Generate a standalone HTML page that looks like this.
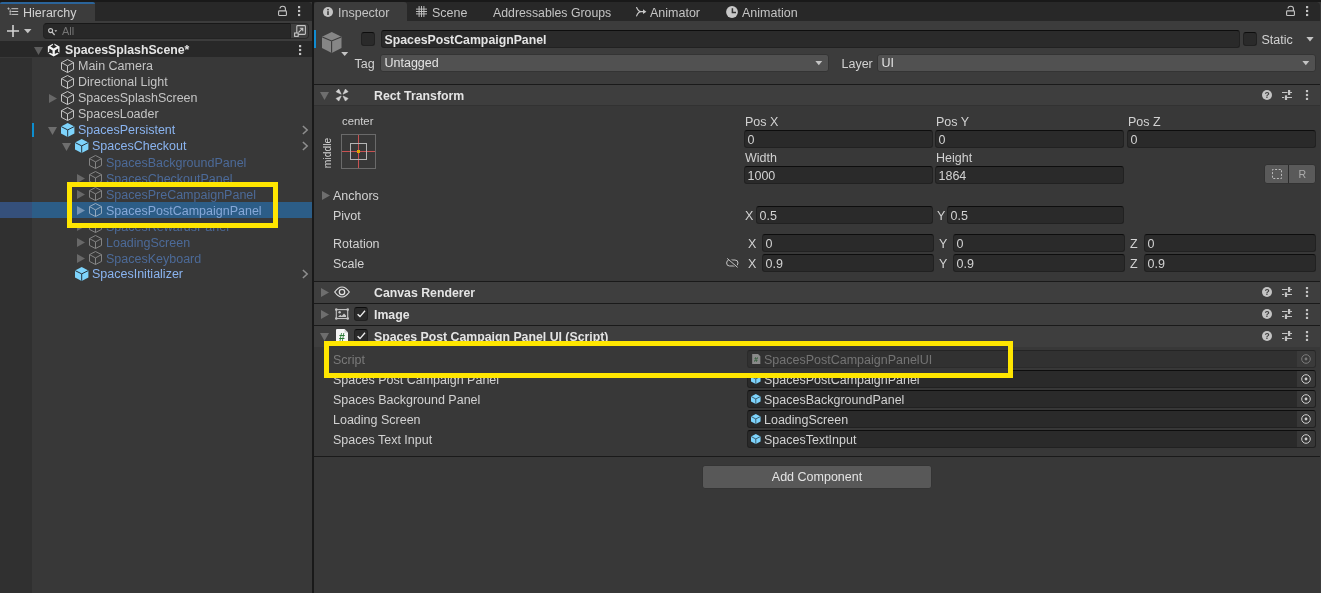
<!DOCTYPE html>
<html><head><meta charset="utf-8">
<style>
*{box-sizing:border-box;margin:0;padding:0}
html,body{width:1321px;height:593px;overflow:hidden;background:#383838}
body{font-family:"Liberation Sans",sans-serif;font-size:12.5px;color:#d2d2d2;position:relative;-webkit-font-smoothing:antialiased}
#root{position:absolute;left:0;top:0;width:1321px;height:593px;will-change:transform;transform:translateZ(0)}
.abs{position:absolute}
.t{position:absolute;white-space:nowrap;line-height:16px;height:16px}
.b{font-weight:700;font-size:12.3px}
svg{position:absolute;overflow:visible}
.fld{position:absolute;height:18px;background:#2a2a2a;border:1px solid #212121;border-top-color:#0d0d0d;border-radius:3px}
.fld span{position:absolute;left:2.5px;top:1px;line-height:16px;white-space:nowrap}
.hdr{position:absolute;left:314px;width:1007px;height:22px;background:#3e3e3e;border-top:1px solid #1a1a1a}
.chk{position:absolute;width:14px;height:14px;background:#2a2a2a;border:1px solid #212121;border-top-color:#0d0d0d;border-radius:3px}
.dd{position:absolute;height:18px;background:#515151;border:1px solid #343434;border-radius:3px}
.dd span{position:absolute;left:3.5px;top:0;line-height:16px;white-space:nowrap;color:#e4e4e4}
</style></head>
<body><div id="root">
<div class="abs" style="left:0;top:0;width:1321px;height:2px;background:#191919"></div>

<div class="abs" style="left:0;top:2px;width:312px;height:19px;background:#282828;border-radius:0 4px 0 0"></div>
<div class="abs" style="left:0;top:2px;width:95px;height:19px;background:#3c3c3c;border-top:2px solid #2b649a;border-radius:2px 2px 0 0"></div>
<svg style="left:7px;top:7.4px" width="12" height="9" viewBox="0 0 12 9"><path d="M4.4 1.7 H11.2 M4.4 4.5 H11.2 M4.4 7.4 H11.2" stroke="#c8c8c8" stroke-width="1"/><path d="M0.4 1.6 H2.6 M1.5 0.5 V2.7 M3.2 2.4 V7.8 M2.6 4.5 H3.8 M2.6 7.4 H3.8" stroke="#c8c8c8" stroke-width="0.8" fill="none"/></svg>
<div class="t" style="left:23px;top:5px">Hierarchy</div>
<svg style="left:277.5px;top:6px" width="9" height="10" viewBox="0 0 9 10"><rect x="0.6" y="4.9" width="7.8" height="4.6" rx="0.8" fill="none" stroke="#c4c4c4" stroke-width="1.1"/><path d="M2 2.6 a2.7 2.4 0 0 1 5.4 0 V4.9" fill="none" stroke="#c4c4c4" stroke-width="1.1"/></svg>
<svg style="left:297.7px;top:6px" width="2.2" height="10.2" viewBox="0 0 2.2 10.2"><rect x="0" y="0" width="2.2" height="2.2" fill="#c4c4c4"/><rect x="0" y="3.9" width="2.2" height="2.2" fill="#c4c4c4"/><rect x="0" y="7.9" width="2.2" height="2.2" fill="#c4c4c4"/></svg>
<div class="abs" style="left:0;top:21px;width:312px;height:20px;background:#3c3c3c"></div>
<svg style="left:7px;top:25px" width="12" height="12" viewBox="0 0 12 12"><path d="M6 0 V12 M0 6 H12" stroke="#d2d2d2" stroke-width="1.6"/></svg>
<svg style="left:23.5px;top:29px" width="7.5" height="4.3" viewBox="0 0 7 4"><path d="M0 0 H7 L3.5 4 Z" fill="#c4c4c4"/></svg>
<div class="abs" style="left:43px;top:23px;width:248px;height:16px;background:#282828;border:1px solid #232323;border-top-color:#181818;border-radius:4px 0 0 4px"></div>
<svg style="left:48px;top:28px" width="10" height="8" viewBox="0 0 10 8"><circle cx="2.6" cy="2.6" r="2" fill="none" stroke="#c4c4c4" stroke-width="1.1"/><path d="M4 4 L6.6 7" stroke="#c4c4c4" stroke-width="1.2"/><path d="M6.4 2.3 H9.2 L7.8 3.9 Z" fill="#c4c4c4"/></svg>
<div class="t" style="left:62px;top:22.9px;color:#747474;font-size:11px">All</div>
<div class="abs" style="left:291px;top:23px;width:18px;height:16px;background:#404040;border:1px solid #2a2a2a;border-left:none;border-radius:0 4px 4px 0"></div>
<svg style="left:294px;top:25px" width="12" height="12" viewBox="0 0 12 12"><rect x="2.8" y="0.6" width="8.6" height="8.8" rx="0.8" fill="none" stroke="#c4c4c4" stroke-width="1.1"/><rect x="0.6" y="8" width="3.6" height="3.4" fill="#404040" stroke="#c4c4c4" stroke-width="1.1"/><path d="M4.6 7.4 L8.6 3.4 M5.8 3.2 H8.8 V6.2" stroke="#c4c4c4" stroke-width="1.1" fill="none"/></svg>
<div class="abs" style="left:0;top:58px;width:32px;height:535px;background:#303030"></div>
<div class="abs" style="left:0;top:41px;width:312px;height:16px;background:#282828"></div>
<svg style="left:34px;top:47px" width="9" height="8" viewBox="0 0 9 8"><path d="M0 0 L9 0 L4.5 8 Z" fill="#5e5e5e"/></svg>
<svg style="left:47.3px;top:42.8px" width="13.4" height="13.8" viewBox="0 0 14 14"><path d="M7 0 L13.1 3.5 L13.1 10.5 L7 14 L0.9 10.5 L0.9 3.5 Z" fill="#f4f4f4"/><g fill="#282828"><path d="M6.2 -0.2 H7.8 V2 L10.4 3.5 L7 5.5 L3.6 3.5 L6.2 2 Z"/><path d="M2.4 5.6 L5.8 7.5 V11.3 L2.4 9.4 Z"/><path d="M11.6 5.6 L8.2 7.5 V11.3 L11.6 9.4 Z"/><path d="M0.5 10.1 L2.9 8.7 L3.5 9.7 L1.2 11.2 Z"/><path d="M13.5 10.1 L11.1 8.7 L10.5 9.7 L12.8 11.2 Z"/></g></svg>
<div class="t b" style="left:65px;top:41.5px;color:#e4e4e4">SpacesSplashScene*</div>
<svg style="left:298.9px;top:44.9px" width="2.2" height="10.2" viewBox="0 0 2.2 10.2"><rect x="0" y="0" width="2.2" height="2.2" fill="#c4c4c4"/><rect x="0" y="3.9" width="2.2" height="2.2" fill="#c4c4c4"/><rect x="0" y="7.9" width="2.2" height="2.2" fill="#c4c4c4"/></svg>
<svg style="left:61px;top:59px" width="14" height="14" viewBox="0 0 14 14" opacity="1"><path d="M6.5 0.5 L12.5 3.6 L12.5 10.4 L6.5 13.5 L0.5 10.4 L0.5 3.6 Z M0.5 3.6 L6.5 6.9 L12.5 3.6 M6.5 6.9 L6.5 13.5" fill="none" stroke="#c4c4c4" stroke-width="1" stroke-linejoin="round"/></svg><div class="t" style="left:78px;top:58px;color:#c4c4c4">Main Camera</div>
<svg style="left:61px;top:75px" width="14" height="14" viewBox="0 0 14 14" opacity="1"><path d="M6.5 0.5 L12.5 3.6 L12.5 10.4 L6.5 13.5 L0.5 10.4 L0.5 3.6 Z M0.5 3.6 L6.5 6.9 L12.5 3.6 M6.5 6.9 L6.5 13.5" fill="none" stroke="#c4c4c4" stroke-width="1" stroke-linejoin="round"/></svg><div class="t" style="left:78px;top:74px;color:#c4c4c4">Directional Light</div>
<svg style="left:49px;top:94.1px" width="8" height="9" viewBox="0 0 8 9"><path d="M0 0 L8 4.5 L0 9 Z" fill="#686868"/></svg><svg style="left:61px;top:91px" width="14" height="14" viewBox="0 0 14 14" opacity="1"><path d="M6.5 0.5 L12.5 3.6 L12.5 10.4 L6.5 13.5 L0.5 10.4 L0.5 3.6 Z M0.5 3.6 L6.5 6.9 L12.5 3.6 M6.5 6.9 L6.5 13.5" fill="none" stroke="#c4c4c4" stroke-width="1" stroke-linejoin="round"/></svg><div class="t" style="left:78px;top:90px;color:#c4c4c4">SpacesSplashScreen</div>
<svg style="left:61px;top:107px" width="14" height="14" viewBox="0 0 14 14" opacity="1"><path d="M6.5 0.5 L12.5 3.6 L12.5 10.4 L6.5 13.5 L0.5 10.4 L0.5 3.6 Z M0.5 3.6 L6.5 6.9 L12.5 3.6 M6.5 6.9 L6.5 13.5" fill="none" stroke="#c4c4c4" stroke-width="1" stroke-linejoin="round"/></svg><div class="t" style="left:78px;top:106px;color:#c4c4c4">SpacesLoader</div>
<svg style="left:48px;top:127px" width="9" height="8" viewBox="0 0 9 8"><path d="M0 0 L9 0 L4.5 8 Z" fill="#6e6e6e"/></svg><svg style="left:60.8px;top:123px" width="14" height="14" viewBox="0 0 14 14"><path d="M6.7 0.1 L13.4 3.5 L13.4 10.5 L6.7 13.9 L0 10.5 L0 3.5 Z" fill="#7ed4fc"/><path d="M0.2 3.6 L6.7 6.9 L13.2 3.6 M6.7 6.9 L6.7 13.8" fill="none" stroke="#26333d" stroke-width="1"/></svg><div class="t" style="left:78px;top:122px;color:#8ab4f0">SpacesPersistent</div><svg style="left:301.5px;top:125.1px" width="6" height="10" viewBox="0 0 6 10"><path d="M0.9 1 L5.2 5 L0.9 9" fill="none" stroke="#8e8e8e" stroke-width="1.5"/></svg>
<svg style="left:62px;top:143px" width="9" height="8" viewBox="0 0 9 8"><path d="M0 0 L9 0 L4.5 8 Z" fill="#6e6e6e"/></svg><svg style="left:74.8px;top:139px" width="14" height="14" viewBox="0 0 14 14"><path d="M6.7 0.1 L13.4 3.5 L13.4 10.5 L6.7 13.9 L0 10.5 L0 3.5 Z" fill="#7ed4fc"/><path d="M0.2 3.6 L6.7 6.9 L13.2 3.6 M6.7 6.9 L6.7 13.8" fill="none" stroke="#26333d" stroke-width="1"/></svg><div class="t" style="left:92px;top:138px;color:#8ab4f0">SpacesCheckout</div><svg style="left:301.5px;top:141.1px" width="6" height="10" viewBox="0 0 6 10"><path d="M0.9 1 L5.2 5 L0.9 9" fill="none" stroke="#8e8e8e" stroke-width="1.5"/></svg>
<svg style="left:89px;top:155px" width="14" height="14" viewBox="0 0 14 14" opacity="1"><path d="M6.5 0.5 L12.5 3.6 L12.5 10.4 L6.5 13.5 L0.5 10.4 L0.5 3.6 Z M0.5 3.6 L6.5 6.9 L12.5 3.6 M6.5 6.9 L6.5 13.5" fill="none" stroke="#848484" stroke-width="1" stroke-linejoin="round"/></svg><div class="t" style="left:106px;top:155px;color:#4c6a98">SpacesBackgroundPanel</div>
<svg style="left:77px;top:174.1px" width="8" height="9" viewBox="0 0 8 9"><path d="M0 0 L8 4.5 L0 9 Z" fill="#686868"/></svg><svg style="left:89px;top:171px" width="14" height="14" viewBox="0 0 14 14" opacity="1"><path d="M6.5 0.5 L12.5 3.6 L12.5 10.4 L6.5 13.5 L0.5 10.4 L0.5 3.6 Z M0.5 3.6 L6.5 6.9 L12.5 3.6 M6.5 6.9 L6.5 13.5" fill="none" stroke="#848484" stroke-width="1" stroke-linejoin="round"/></svg><div class="t" style="left:106px;top:171px;color:#4c6a98">SpacesCheckoutPanel</div>
<svg style="left:77px;top:190.1px" width="8" height="9" viewBox="0 0 8 9"><path d="M0 0 L8 4.5 L0 9 Z" fill="#686868"/></svg><svg style="left:89px;top:187px" width="14" height="14" viewBox="0 0 14 14" opacity="1"><path d="M6.5 0.5 L12.5 3.6 L12.5 10.4 L6.5 13.5 L0.5 10.4 L0.5 3.6 Z M0.5 3.6 L6.5 6.9 L12.5 3.6 M6.5 6.9 L6.5 13.5" fill="none" stroke="#848484" stroke-width="1" stroke-linejoin="round"/></svg><div class="t" style="left:106px;top:187px;color:#4c6a98">SpacesPreCampaignPanel</div>
<div class="abs" style="left:0;top:202px;width:312px;height:16px;background:#2c5d87"></div><div class="abs" style="left:0;top:202px;width:32px;height:16px;background:#35507b"></div><svg style="left:77px;top:206.1px" width="8" height="9" viewBox="0 0 8 9"><path d="M0 0 L8 4.5 L0 9 Z" fill="#7594b4"/></svg><svg style="left:89px;top:203px" width="14" height="14" viewBox="0 0 14 14" opacity="1"><path d="M6.5 0.5 L12.5 3.6 L12.5 10.4 L6.5 13.5 L0.5 10.4 L0.5 3.6 Z M0.5 3.6 L6.5 6.9 L12.5 3.6 M6.5 6.9 L6.5 13.5" fill="none" stroke="#93a9bf" stroke-width="1" stroke-linejoin="round"/></svg><div class="t" style="left:106px;top:203px;color:#86a8d8">SpacesPostCampaignPanel</div>
<svg style="left:77px;top:222.1px" width="8" height="9" viewBox="0 0 8 9"><path d="M0 0 L8 4.5 L0 9 Z" fill="#686868"/></svg><svg style="left:89px;top:219px" width="14" height="14" viewBox="0 0 14 14" opacity="1"><path d="M6.5 0.5 L12.5 3.6 L12.5 10.4 L6.5 13.5 L0.5 10.4 L0.5 3.6 Z M0.5 3.6 L6.5 6.9 L12.5 3.6 M6.5 6.9 L6.5 13.5" fill="none" stroke="#848484" stroke-width="1" stroke-linejoin="round"/></svg><div class="t" style="left:106px;top:219px;color:#4c6a98">SpacesRewardsPanel</div>
<svg style="left:77px;top:238.1px" width="8" height="9" viewBox="0 0 8 9"><path d="M0 0 L8 4.5 L0 9 Z" fill="#686868"/></svg><svg style="left:89px;top:235px" width="14" height="14" viewBox="0 0 14 14" opacity="1"><path d="M6.5 0.5 L12.5 3.6 L12.5 10.4 L6.5 13.5 L0.5 10.4 L0.5 3.6 Z M0.5 3.6 L6.5 6.9 L12.5 3.6 M6.5 6.9 L6.5 13.5" fill="none" stroke="#848484" stroke-width="1" stroke-linejoin="round"/></svg><div class="t" style="left:106px;top:235px;color:#4c6a98">LoadingScreen</div>
<svg style="left:77px;top:254.1px" width="8" height="9" viewBox="0 0 8 9"><path d="M0 0 L8 4.5 L0 9 Z" fill="#686868"/></svg><svg style="left:89px;top:251px" width="14" height="14" viewBox="0 0 14 14" opacity="1"><path d="M6.5 0.5 L12.5 3.6 L12.5 10.4 L6.5 13.5 L0.5 10.4 L0.5 3.6 Z M0.5 3.6 L6.5 6.9 L12.5 3.6 M6.5 6.9 L6.5 13.5" fill="none" stroke="#848484" stroke-width="1" stroke-linejoin="round"/></svg><div class="t" style="left:106px;top:251px;color:#4c6a98">SpacesKeyboard</div>
<svg style="left:74.8px;top:267px" width="14" height="14" viewBox="0 0 14 14"><path d="M6.7 0.1 L13.4 3.5 L13.4 10.5 L6.7 13.9 L0 10.5 L0 3.5 Z" fill="#7ed4fc"/><path d="M0.2 3.6 L6.7 6.9 L13.2 3.6 M6.7 6.9 L6.7 13.8" fill="none" stroke="#26333d" stroke-width="1"/></svg><div class="t" style="left:92px;top:266px;color:#8ab4f0">SpacesInitializer</div><svg style="left:301.5px;top:269.1px" width="6" height="10" viewBox="0 0 6 10"><path d="M0.9 1 L5.2 5 L0.9 9" fill="none" stroke="#8e8e8e" stroke-width="1.5"/></svg>
<div class="abs" style="left:32px;top:123px;width:2px;height:14px;background:#0d8ecf"></div>
<div class="abs" style="left:67px;top:182px;width:211px;height:46px;background:#383838;overflow:hidden">
<div class="abs" style="left:-67px;top:-182px;width:312px;height:593px">
<svg style="left:77px;top:190.1px" width="8" height="9" viewBox="0 0 8 9"><path d="M0 0 L8 4.5 L0 9 Z" fill="#686868"/></svg><svg style="left:89px;top:187px" width="14" height="14" viewBox="0 0 14 14" opacity="1"><path d="M6.5 0.5 L12.5 3.6 L12.5 10.4 L6.5 13.5 L0.5 10.4 L0.5 3.6 Z M0.5 3.6 L6.5 6.9 L12.5 3.6 M6.5 6.9 L6.5 13.5" fill="none" stroke="#848484" stroke-width="1" stroke-linejoin="round"/></svg><div class="t" style="left:106px;top:187px;color:#4c6a98">SpacesPreCampaignPanel</div>
<div class="abs" style="left:0;top:202px;width:312px;height:16px;background:#2c5d87"></div><div class="abs" style="left:0;top:202px;width:32px;height:16px;background:#35507b"></div><svg style="left:77px;top:206.1px" width="8" height="9" viewBox="0 0 8 9"><path d="M0 0 L8 4.5 L0 9 Z" fill="#7594b4"/></svg><svg style="left:89px;top:203px" width="14" height="14" viewBox="0 0 14 14" opacity="1"><path d="M6.5 0.5 L12.5 3.6 L12.5 10.4 L6.5 13.5 L0.5 10.4 L0.5 3.6 Z M0.5 3.6 L6.5 6.9 L12.5 3.6 M6.5 6.9 L6.5 13.5" fill="none" stroke="#93a9bf" stroke-width="1" stroke-linejoin="round"/></svg><div class="t" style="left:106px;top:203px;color:#86a8d8">SpacesPostCampaignPanel</div>
</div>
<div class="abs" style="left:0;top:0;width:211px;height:46px;border:5px solid #ffe600"></div>
</div>
<div class="abs" style="left:312px;top:0;width:2px;height:593px;background:#191919"></div>
<div class="abs" style="left:314px;top:2px;width:1006px;height:19px;background:#282828;border-radius:0 4px 0 0"></div>
<div class="abs" style="left:314px;top:2px;width:93px;height:19px;background:#3c3c3c;border-radius:3px 3px 0 0"></div>
<div class="abs" style="left:314px;top:21px;width:1007px;height:63px;background:#3c3c3c"></div>
<svg style="left:323px;top:7px" width="10" height="10" viewBox="0 0 10 10"><circle cx="5" cy="5" r="5" fill="#c4c4c4"/><rect x="4.2" y="4.2" width="1.6" height="3.8" fill="#3c3c3c"/><circle cx="5" cy="2.6" r="0.95" fill="#3c3c3c"/></svg>
<div class="t" style="left:338px;top:5px;color:#c4c4c4">Inspector</div>
<svg style="left:416px;top:6px" width="11" height="11" viewBox="0 0 11 11"><path d="M3.1 0 V11 M5.5 0 V11 M7.9 0 V11 M0 3.1 H11 M0 5.5 H11 M0 7.9 H11" stroke="#c4c4c4" stroke-width="0.95"/></svg>
<div class="t" style="left:432px;top:5px;color:#c4c4c4">Scene</div>
<div class="t" style="left:493px;top:5px;color:#c4c4c4;font-size:12.3px">Addressables Groups</div>
<svg style="left:635.5px;top:7px" width="10.5" height="9.4" viewBox="0 0 10.5 9.4"><path d="M0.6 0.5 Q2.2 4.4 5 4.7 Q2.2 5 0.6 8.9 M5 4.7 H8.4" fill="none" stroke="#c8c8c8" stroke-width="1.2" stroke-linecap="round"/><path d="M7 2.3 L10.4 4.7 L7 7.1 Z" fill="#c8c8c8"/></svg>
<div class="t" style="left:650px;top:5px;color:#c4c4c4">Animator</div>
<svg style="left:726.1px;top:6.1px" width="12" height="12" viewBox="0 0 12 12"><circle cx="6" cy="6" r="5.9" fill="#c8c8c8"/><path d="M6.4 2.2 V6.4 H10" stroke="#333333" stroke-width="1.5" fill="none"/></svg>
<div class="t" style="left:742px;top:5px;color:#c4c4c4">Animation</div>
<svg style="left:1285.5px;top:6px" width="9" height="10" viewBox="0 0 9 10"><rect x="0.6" y="4.9" width="7.8" height="4.6" rx="0.8" fill="none" stroke="#c4c4c4" stroke-width="1.1"/><path d="M2 2.6 a2.7 2.4 0 0 1 5.4 0 V4.9" fill="none" stroke="#c4c4c4" stroke-width="1.1"/></svg>
<svg style="left:1305.9px;top:6px" width="2.2" height="10.2" viewBox="0 0 2.2 10.2"><rect x="0" y="0" width="2.2" height="2.2" fill="#c4c4c4"/><rect x="0" y="3.9" width="2.2" height="2.2" fill="#c4c4c4"/><rect x="0" y="7.9" width="2.2" height="2.2" fill="#c4c4c4"/></svg>
<div class="abs" style="left:314px;top:30px;width:2px;height:18px;background:#108cd2"></div>
<svg style="left:321.7px;top:31.5px" width="19.5" height="21" viewBox="0 0 19.5 21"><path d="M9.75 0 L19.5 4.8 L19.5 16 L9.75 21 L0 16 L0 4.8 Z" fill="#868686"/><path d="M0.3 5 L9.6 9 L19.2 5 M9.6 9 V20.8" stroke="#3a3a3a" stroke-width="1.1" fill="none"/></svg>
<svg style="left:340.5px;top:52px" width="7.4" height="4" viewBox="0 0 7 4"><path d="M0 0 H7 L3.5 4 Z" fill="#c4c4c4"/></svg>
<div class="chk" style="left:361px;top:32px"></div>
<div class="fld" style="left:381px;top:30px;width:859px"><span class="b" style="color:#e4e4e4;left:2.5px">SpacesPostCampaignPanel</span></div>
<div class="chk" style="left:1243px;top:32px"></div>
<div class="t" style="left:1261.5px;top:32px">Static</div>
<svg style="left:1306px;top:37px" width="8" height="4.5" viewBox="0 0 8 5"><path d="M0 0 H8 L4 5 Z" fill="#c4c4c4"/></svg>
<div class="t" style="left:354.5px;top:56px">Tag</div>
<div class="dd" style="left:380px;top:54px;width:449px"><span>Untagged</span></div>
<svg style="left:815.3px;top:61px" width="7.6" height="4.3" viewBox="0 0 8 5"><path d="M0 0 H8 L4 5 Z" fill="#c4c4c4"/></svg>
<div class="t" style="left:841.5px;top:56px">Layer</div>
<div class="dd" style="left:877px;top:54px;width:439px"><span>UI</span></div>
<svg style="left:1302px;top:61px" width="7.6" height="4.3" viewBox="0 0 8 5"><path d="M0 0 H8 L4 5 Z" fill="#c4c4c4"/></svg>
<div class="hdr" style="top:84px"></div><svg style="left:320px;top:92px" width="9" height="8" viewBox="0 0 9 8"><path d="M0 0 L9 0 L4.5 8 Z" fill="#6e6e6e"/></svg><svg style="left:336.2px;top:88.9px" width="12.2" height="12.2" viewBox="-6 -6 12 12"><g fill="#d2d2d2" stroke="#d2d2d2" stroke-width="0.6" stroke-linejoin="round"><path d="M-5.9 -3.3 L-3.3 -5.9 L-0.9 -0.9 Z" transform="rotate(0)"/><path d="M-5.9 -3.3 L-3.3 -5.9 L-0.9 -0.9 Z" transform="rotate(90)"/><path d="M-5.9 -3.3 L-3.3 -5.9 L-0.9 -0.9 Z" transform="rotate(180)"/><path d="M-5.9 -3.3 L-3.3 -5.9 L-0.9 -0.9 Z" transform="rotate(270)"/></g></svg><div class="t b" style="left:374px;top:88px;color:#e4e4e4">Rect Transform</div><svg style="left:1262px;top:90px" width="10" height="10" viewBox="0 0 10 10"><circle cx="5" cy="5" r="5" fill="#c4c4c4"/><text x="5" y="8.1" font-size="8.5" font-weight="700" text-anchor="middle" fill="#3e3e3e" font-family="Liberation Sans">?</text></svg><svg style="left:1282px;top:90px" width="10" height="10" viewBox="0 0 10 10"><path d="M0 2.5 H5.5 M8 2.5 H10 M0 7.5 H2.2 M5 7.5 H10" stroke="#c4c4c4" stroke-width="1" fill="none"/><rect x="6" y="0" width="2.2" height="5" fill="#c4c4c4"/><rect x="2.9" y="5.3" width="2.2" height="4.7" fill="#c4c4c4"/></svg><svg style="left:1305px;top:90px" width="4" height="10" viewBox="0 0 4 10"><rect x="0.9" y="0" width="2.2" height="2.2" fill="#c4c4c4"/><rect x="0.9" y="3.9" width="2.2" height="2.2" fill="#c4c4c4"/><rect x="0.9" y="7.8" width="2.2" height="2.2" fill="#c4c4c4"/></svg>
<div class="abs" style="left:314px;top:105px;width:1007px;height:1px;background:#323232"></div>
<div class="t" style="left:342px;top:113px;font-size:11.3px">center</div>
<div class="t" style="left:312.2px;top:144.5px;width:32px;text-align:center;font-size:10.3px;transform:rotate(-90deg)">middle</div>
<svg style="left:341px;top:134px" width="35" height="35" viewBox="0 0 35 35"><rect x="0.5" y="0.5" width="34" height="34" fill="none" stroke="#6a6a6a"/><path d="M17.5 1 V34 M1 17.5 H34" stroke="#c85252" stroke-width="1"/><rect x="9.5" y="9.5" width="16" height="16" fill="none" stroke="#b4b4b4"/><rect x="16" y="16" width="3" height="3" fill="#e0a800"/></svg>
<div class="t" style="left:745px;top:114px;">Pos X</div>
<div class="t" style="left:936px;top:114px;">Pos Y</div>
<div class="t" style="left:1128px;top:114px;">Pos Z</div>
<div class="fld" style="left:744px;top:130px;width:189px"><span>0</span></div>
<div class="fld" style="left:935px;top:130px;width:189px"><span>0</span></div>
<div class="fld" style="left:1127px;top:130px;width:189px"><span>0</span></div>
<div class="t" style="left:745px;top:150px;">Width</div>
<div class="t" style="left:936px;top:150px;">Height</div>
<div class="fld" style="left:744px;top:166px;width:189px"><span>1000</span></div>
<div class="fld" style="left:935px;top:166px;width:189px"><span>1864</span></div>
<div class="abs" style="left:1264px;top:164px;width:52px;height:20px;background:#5a5a5a;border:1px solid #323232;border-radius:3px"></div>
<div class="abs" style="left:1288px;top:165px;width:1px;height:18px;background:#2c2c2c"></div>
<svg style="left:1272px;top:169px" width="10" height="10" viewBox="0 0 10 10"><rect x="0.5" y="0.5" width="9" height="9" fill="none" stroke="#bcbcbc" stroke-dasharray="2 1.6" stroke-dashoffset="1"/></svg>
<div class="t" style="left:1298.5px;top:166.4px;font-size:10.6px;color:#acacac">R</div>
<svg style="left:322px;top:190.8px" width="8" height="9" viewBox="0 0 8 9"><path d="M0 0 L8 4.5 L0 9 Z" fill="#6e6e6e"/></svg>
<div class="t" style="left:333px;top:188px;">Anchors</div>
<div class="t" style="left:333px;top:208px;">Pivot</div>
<div class="t" style="left:745px;top:208px;">X</div>
<div class="fld" style="left:756px;top:206px;width:177px"><span>0.5</span></div>
<div class="t" style="left:937px;top:208px;">Y</div>
<div class="fld" style="left:947px;top:206px;width:177px"><span>0.5</span></div>
<div class="t" style="left:333px;top:236px;">Rotation</div>
<div class="t" style="left:333px;top:256px;">Scale</div>
<div class="t" style="left:748px;top:236px;">X</div>
<div class="fld" style="left:762px;top:234px;width:172px"><span>0</span></div>
<div class="t" style="left:939px;top:236px;">Y</div>
<div class="fld" style="left:953px;top:234px;width:172px"><span>0</span></div>
<div class="t" style="left:1130px;top:236px;">Z</div>
<div class="fld" style="left:1144px;top:234px;width:172px"><span>0</span></div>
<div class="t" style="left:748px;top:256px;">X</div>
<div class="fld" style="left:762px;top:254px;width:172px"><span>0.9</span></div>
<div class="t" style="left:939px;top:256px;">Y</div>
<div class="fld" style="left:953px;top:254px;width:172px"><span>0.9</span></div>
<div class="t" style="left:1130px;top:256px;">Z</div>
<div class="fld" style="left:1144px;top:254px;width:172px"><span>0.9</span></div>
<svg style="left:725.8px;top:258.3px" width="12.6" height="10" viewBox="0 0 12.6 10"><rect x="0.6" y="2" width="11.4" height="6" rx="3" fill="none" stroke="#c4c4c4" stroke-width="1"/><path d="M1.6 -0.2 L11.6 9.6" stroke="#383838" stroke-width="2.6"/><path d="M1.2 0.4 L11.6 9.4" stroke="#c4c4c4" stroke-width="1"/></svg>
<div class="hdr" style="top:281px"></div><svg style="left:321px;top:288px" width="8" height="9" viewBox="0 0 8 9"><path d="M0 0 L8 4.5 L0 9 Z" fill="#6e6e6e"/></svg><svg style="left:334px;top:286px" width="16" height="12" viewBox="0 0 16 12"><path d="M0.7 6 Q8 -4 15.3 6 Q8 16 0.7 6 Z" fill="none" stroke="#e0e0e0" stroke-width="1.2"/><circle cx="8" cy="6" r="2.7" fill="none" stroke="#e0e0e0" stroke-width="1.3"/></svg><div class="t b" style="left:374px;top:285px;color:#e4e4e4">Canvas Renderer</div><svg style="left:1262px;top:287px" width="10" height="10" viewBox="0 0 10 10"><circle cx="5" cy="5" r="5" fill="#c4c4c4"/><text x="5" y="8.1" font-size="8.5" font-weight="700" text-anchor="middle" fill="#3e3e3e" font-family="Liberation Sans">?</text></svg><svg style="left:1282px;top:287px" width="10" height="10" viewBox="0 0 10 10"><path d="M0 2.5 H5.5 M8 2.5 H10 M0 7.5 H2.2 M5 7.5 H10" stroke="#c4c4c4" stroke-width="1" fill="none"/><rect x="6" y="0" width="2.2" height="5" fill="#c4c4c4"/><rect x="2.9" y="5.3" width="2.2" height="4.7" fill="#c4c4c4"/></svg><svg style="left:1305px;top:287px" width="4" height="10" viewBox="0 0 4 10"><rect x="0.9" y="0" width="2.2" height="2.2" fill="#c4c4c4"/><rect x="0.9" y="3.9" width="2.2" height="2.2" fill="#c4c4c4"/><rect x="0.9" y="7.8" width="2.2" height="2.2" fill="#c4c4c4"/></svg>
<div class="hdr" style="top:303px"></div><svg style="left:321px;top:310px" width="8" height="9" viewBox="0 0 8 9"><path d="M0 0 L8 4.5 L0 9 Z" fill="#6e6e6e"/></svg><svg style="left:335px;top:308px" width="14" height="12" viewBox="0 0 14 12"><rect x="1.3" y="1.6" width="11.4" height="8.9" fill="none" stroke="#c4c4c4" stroke-width="1.1"/><circle cx="1.3" cy="1.6" r="1.3" fill="#c4c4c4"/><circle cx="12.7" cy="1.6" r="1.3" fill="#c4c4c4"/><circle cx="1.3" cy="10.5" r="1.3" fill="#c4c4c4"/><circle cx="12.7" cy="10.5" r="1.3" fill="#c4c4c4"/><circle cx="4.6" cy="4.3" r="1.2" fill="#c4c4c4"/><path d="M3 9 L5.2 6.8 L6.8 8 L9 5.6 L11 7.5 V9 Z" fill="#c4c4c4"/></svg><div class="chk" style="left:354px;top:307px"></div><svg style="left:357px;top:310px" width="9" height="8" viewBox="0 0 9 8"><path d="M0.6 4.2 L3 6.6 L8 0.8" fill="none" stroke="#f0f0f0" stroke-width="1.35"/></svg><div class="t b" style="left:374px;top:307px;color:#e4e4e4">Image</div><svg style="left:1262px;top:309px" width="10" height="10" viewBox="0 0 10 10"><circle cx="5" cy="5" r="5" fill="#c4c4c4"/><text x="5" y="8.1" font-size="8.5" font-weight="700" text-anchor="middle" fill="#3e3e3e" font-family="Liberation Sans">?</text></svg><svg style="left:1282px;top:309px" width="10" height="10" viewBox="0 0 10 10"><path d="M0 2.5 H5.5 M8 2.5 H10 M0 7.5 H2.2 M5 7.5 H10" stroke="#c4c4c4" stroke-width="1" fill="none"/><rect x="6" y="0" width="2.2" height="5" fill="#c4c4c4"/><rect x="2.9" y="5.3" width="2.2" height="4.7" fill="#c4c4c4"/></svg><svg style="left:1305px;top:309px" width="4" height="10" viewBox="0 0 4 10"><rect x="0.9" y="0" width="2.2" height="2.2" fill="#c4c4c4"/><rect x="0.9" y="3.9" width="2.2" height="2.2" fill="#c4c4c4"/><rect x="0.9" y="7.8" width="2.2" height="2.2" fill="#c4c4c4"/></svg>
<div class="hdr" style="top:325px"></div><svg style="left:320px;top:333px" width="9" height="8" viewBox="0 0 9 8"><path d="M0 0 L9 0 L4.5 8 Z" fill="#6e6e6e"/></svg><svg style="left:336px;top:329px" width="12" height="14" viewBox="0 0 12 14"><path d="M1 0 H8.5 L12 3.5 V14 H0 V1 Q0 0 1 0 Z" fill="#f6f6f6"/><path d="M8.5 0 L12 3.5 H8.5 Z" fill="#cfcfcf"/><text x="5.8" y="11.5" font-size="10.5" font-weight="700" text-anchor="middle" fill="#2a7a35" font-family="Liberation Sans">#</text></svg><div class="chk" style="left:354px;top:329px"></div><svg style="left:357px;top:332px" width="9" height="8" viewBox="0 0 9 8"><path d="M0.6 4.2 L3 6.6 L8 0.8" fill="none" stroke="#f0f0f0" stroke-width="1.35"/></svg><div class="t b" style="left:374px;top:329px;color:#e4e4e4">Spaces Post Campaign Panel UI (Script)</div><svg style="left:1262px;top:331px" width="10" height="10" viewBox="0 0 10 10"><circle cx="5" cy="5" r="5" fill="#c4c4c4"/><text x="5" y="8.1" font-size="8.5" font-weight="700" text-anchor="middle" fill="#3e3e3e" font-family="Liberation Sans">?</text></svg><svg style="left:1282px;top:331px" width="10" height="10" viewBox="0 0 10 10"><path d="M0 2.5 H5.5 M8 2.5 H10 M0 7.5 H2.2 M5 7.5 H10" stroke="#c4c4c4" stroke-width="1" fill="none"/><rect x="6" y="0" width="2.2" height="5" fill="#c4c4c4"/><rect x="2.9" y="5.3" width="2.2" height="4.7" fill="#c4c4c4"/></svg><svg style="left:1305px;top:331px" width="4" height="10" viewBox="0 0 4 10"><rect x="0.9" y="0" width="2.2" height="2.2" fill="#c4c4c4"/><rect x="0.9" y="3.9" width="2.2" height="2.2" fill="#c4c4c4"/><rect x="0.9" y="7.8" width="2.2" height="2.2" fill="#c4c4c4"/></svg>
<div class="t" style="left:333px;top:372px;">Spaces Post Campaign Panel</div>
<div class="fld" style="left:747px;top:370px;width:569px;"><span style="left:16px;color:#d2d2d2">SpacesPostCampaignPanel</span><div class="abs" style="right:0;top:0;width:18px;height:16px;background:#373737;border-radius:0 2px 2px 0"></div></div><svg style="left:750.8px;top:374px" width="10" height="10" viewBox="0 0 14 14"><path d="M6.7 0.1 L13.4 3.5 L13.4 10.5 L6.7 13.9 L0 10.5 L0 3.5 Z" fill="#7ed4fc"/><path d="M0.2 3.6 L6.7 6.9 L13.2 3.6 M6.7 6.9 L6.7 13.8" fill="none" stroke="#26333d" stroke-width="1"/></svg><svg style="left:1301px;top:374px" width="10" height="10" viewBox="0 0 10 10"><circle cx="5" cy="5" r="4.3" fill="none" stroke="#d0d0d0" stroke-width="1"/><circle cx="5" cy="5" r="1.4" fill="#d0d0d0"/></svg>
<div class="t" style="left:333px;top:392px;">Spaces Background Panel</div>
<div class="fld" style="left:747px;top:390px;width:569px;"><span style="left:16px;color:#d2d2d2">SpacesBackgroundPanel</span><div class="abs" style="right:0;top:0;width:18px;height:16px;background:#373737;border-radius:0 2px 2px 0"></div></div><svg style="left:750.8px;top:394px" width="10" height="10" viewBox="0 0 14 14"><path d="M6.7 0.1 L13.4 3.5 L13.4 10.5 L6.7 13.9 L0 10.5 L0 3.5 Z" fill="#7ed4fc"/><path d="M0.2 3.6 L6.7 6.9 L13.2 3.6 M6.7 6.9 L6.7 13.8" fill="none" stroke="#26333d" stroke-width="1"/></svg><svg style="left:1301px;top:394px" width="10" height="10" viewBox="0 0 10 10"><circle cx="5" cy="5" r="4.3" fill="none" stroke="#d0d0d0" stroke-width="1"/><circle cx="5" cy="5" r="1.4" fill="#d0d0d0"/></svg>
<div class="t" style="left:333px;top:412px;">Loading Screen</div>
<div class="fld" style="left:747px;top:410px;width:569px;"><span style="left:16px;color:#d2d2d2">LoadingScreen</span><div class="abs" style="right:0;top:0;width:18px;height:16px;background:#373737;border-radius:0 2px 2px 0"></div></div><svg style="left:750.8px;top:414px" width="10" height="10" viewBox="0 0 14 14"><path d="M6.7 0.1 L13.4 3.5 L13.4 10.5 L6.7 13.9 L0 10.5 L0 3.5 Z" fill="#7ed4fc"/><path d="M0.2 3.6 L6.7 6.9 L13.2 3.6 M6.7 6.9 L6.7 13.8" fill="none" stroke="#26333d" stroke-width="1"/></svg><svg style="left:1301px;top:414px" width="10" height="10" viewBox="0 0 10 10"><circle cx="5" cy="5" r="4.3" fill="none" stroke="#d0d0d0" stroke-width="1"/><circle cx="5" cy="5" r="1.4" fill="#d0d0d0"/></svg>
<div class="t" style="left:333px;top:432px;">Spaces Text Input</div>
<div class="fld" style="left:747px;top:430px;width:569px;"><span style="left:16px;color:#d2d2d2">SpacesTextInput</span><div class="abs" style="right:0;top:0;width:18px;height:16px;background:#373737;border-radius:0 2px 2px 0"></div></div><svg style="left:750.8px;top:434px" width="10" height="10" viewBox="0 0 14 14"><path d="M6.7 0.1 L13.4 3.5 L13.4 10.5 L6.7 13.9 L0 10.5 L0 3.5 Z" fill="#7ed4fc"/><path d="M0.2 3.6 L6.7 6.9 L13.2 3.6 M6.7 6.9 L6.7 13.8" fill="none" stroke="#26333d" stroke-width="1"/></svg><svg style="left:1301px;top:434px" width="10" height="10" viewBox="0 0 10 10"><circle cx="5" cy="5" r="4.3" fill="none" stroke="#d0d0d0" stroke-width="1"/><circle cx="5" cy="5" r="1.4" fill="#d0d0d0"/></svg>
<div class="t" style="left:333px;top:352px;color:#7a7a7a">Script</div>
<div class="fld" style="left:747px;top:350px;width:569px;background:#313131;border-color:#2b2b2b;border-top-color:#242424;"><span style="left:16px;color:#747474">SpacesPostCampaignPanelUI</span><div class="abs" style="right:0;top:0;width:18px;height:16px;background:#3a3a3a;border-radius:0 2px 2px 0"></div></div><svg style="left:752px;top:354px" width="8.5" height="10" viewBox="0 0 9 11"><path d="M0 0 H6.5 L9 2.5 V11 H0 Z" fill="#8a8a8a"/><text x="4.3" y="8.8" font-size="8" font-weight="700" text-anchor="middle" fill="#2d5a35" font-family="Liberation Sans">#</text></svg><svg style="left:1301px;top:354px" width="10" height="10" viewBox="0 0 10 10"><circle cx="5" cy="5" r="4.3" fill="none" stroke="#7a7a7a" stroke-width="1"/><circle cx="5" cy="5" r="1.4" fill="#7a7a7a"/></svg>
<div class="abs" style="left:324px;top:341px;width:689px;height:37px;background:#383838;overflow:hidden">
<div class="abs" style="left:-324px;top:-341px;width:1321px;height:593px">
<div class="t" style="left:333px;top:352px;color:#7a7a7a">Script</div>
<div class="fld" style="left:747px;top:350px;width:569px;background:#313131;border-color:#2b2b2b;border-top-color:#242424;"><span style="left:16px;color:#747474">SpacesPostCampaignPanelUI</span><div class="abs" style="right:0;top:0;width:18px;height:16px;background:#3a3a3a;border-radius:0 2px 2px 0"></div></div><svg style="left:752px;top:354px" width="8.5" height="10" viewBox="0 0 9 11"><path d="M0 0 H6.5 L9 2.5 V11 H0 Z" fill="#8a8a8a"/><text x="4.3" y="8.8" font-size="8" font-weight="700" text-anchor="middle" fill="#2d5a35" font-family="Liberation Sans">#</text></svg><svg style="left:1301px;top:354px" width="10" height="10" viewBox="0 0 10 10"><circle cx="5" cy="5" r="4.3" fill="none" stroke="#7a7a7a" stroke-width="1"/><circle cx="5" cy="5" r="1.4" fill="#7a7a7a"/></svg>
</div>
<div class="abs" style="left:0;top:0;width:689px;height:37px;border:5px solid #ffe600"></div>
</div>


<div class="abs" style="left:314px;top:456px;width:1007px;height:1px;background:#1a1a1a"></div>
<div class="abs" style="left:702px;top:465px;width:230px;height:24px;background:#585858;border:1px solid #343434;border-radius:3px;text-align:center;line-height:22px;color:#e4e4e4">Add Component</div>
<div class="abs" style="left:1320px;top:21px;width:1px;height:572px;background:#3b3b3b"></div>
</div></body></html>
